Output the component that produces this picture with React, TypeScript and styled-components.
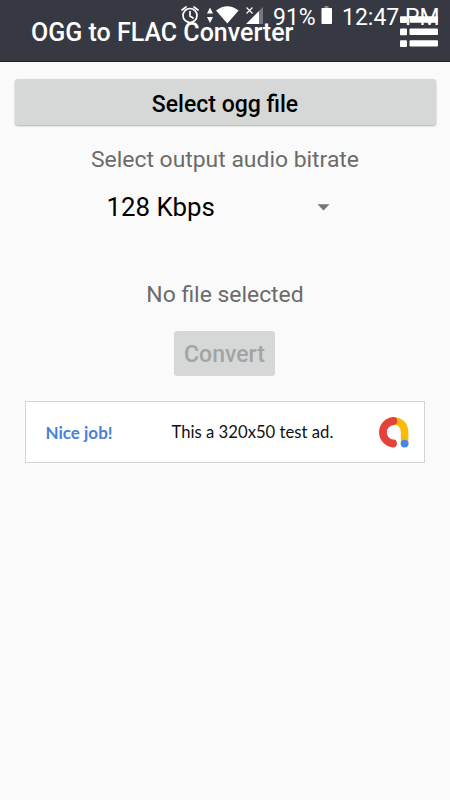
import React from "react";
import styled, { createGlobalStyle } from "styled-components";

const GlobalStyle = createGlobalStyle`
  * { box-sizing: border-box; }
  body {
    margin: 0;
    background: #fafafa;
    font-family: Roboto, "Liberation Sans", sans-serif;
  }
`;

const Screen = styled.div`
  position: relative;
  width: 450px;
  height: 800px;
  overflow: hidden;
  background: #fafafa;
`;

const AppBar = styled.header`
  display: flex;
  justify-content: space-between;
  height: 62px;
  padding: 16px 12px 0 31px;
  background: #363942;
  border-bottom: 1px solid #1d1f25;
`;

const Title = styled.h1`
  margin: 0;
  padding-top: 1px;
  color: #fff;
  font-size: 25px;
  font-weight: 500;
  line-height: 32px;
  white-space: nowrap;
`;

const StatusBar = styled.div`
  position: absolute;
  top: 0;
  right: 11px;
  display: flex;
  height: 33px;
  color: #fff;
`;

const StatusText = styled.span<{ $width: number }>`
  width: ${({ $width }) => $width}px;
  font-size: 23px;
  line-height: 35px;
  white-space: nowrap;
`;

const Content = styled.main`
  display: flex;
  flex-direction: column;
  align-items: center;
  padding-top: 17px;
`;

const Button = styled.button<{ $wide?: boolean }>`
  width: ${({ $wide }) => ($wide ? "421px" : "101px")};
  height: ${({ $wide }) => ($wide ? "46px" : "45px")};
  margin: ${({ $wide }) => ($wide ? "0" : "20px 1px 0 0")};
  padding: ${({ $wide }) => ($wide ? "4px 0 0" : "2px 0 0")};
  border: 0;
  border-radius: 3px;
  background: #d6d8d7;
  box-shadow: ${({ $wide }) => ($wide ? "0 1px 2px rgba(0, 0, 0, 0.3)" : "none")};
  color: ${({ $wide }) => ($wide ? "#000" : "#a2a4a3")};
  font: 500 23px Roboto, "Liberation Sans", sans-serif;
`;

const Label = styled.p<{ $top: number }>`
  margin: ${({ $top }) => $top}px 0 0;
  color: #6b6b6b;
  font-size: 22.9px;
  line-height: 32px;
`;

const Spinner = styled.div`
  display: flex;
  align-items: center;
  justify-content: space-between;
  width: 223px;
  height: 32px;
  margin: 15px 14px 0 0;
  color: #000;
  font-size: 25.8px;
`;

const Ad = styled.aside`
  display: flex;
  align-items: center;
  width: 400px;
  height: 62px;
  margin: 25px 1px 0 0;
  padding: 0 15px 0 20px;
  border: 1px solid #cfd5d8;
  background: #fff;
  font-family: Lato, sans-serif;
  font-size: 16.7px;
`;

const AdLead = styled.span`
  width: 126px;
  color: #4781d8;
  font-size: 17px;
  font-weight: 700;
`;

const AdCopy = styled.span`
  flex: 1;
  color: #111;
  white-space: nowrap;
`;

const StatusIcons = () => (
  <svg width="93" height="33" viewBox="180 0 93 33" fill="none">
    <g stroke="#fff" strokeWidth="1.7" strokeLinecap="round">
      <circle cx="190" cy="15.5" r="7" />
      <path d="M190 11.5v4.5l3 2M182 10l4-3M194 7l4 3" />
    </g>
    <path d="M210 7.5l3 6h-6zM210 23l3-6h-6z" fill="#fff" />
    <path d="M216 10.5Q227.3 1.8 238.6 10.5L227.3 23.5z" fill="#fff" />
    <path d="M259 11l4-4v17h-4z" fill="#777981" />
    <path d="M246 24l13-13v13z" fill="#fff" />
    <path d="M246.5 7.5l6 6m0-6l-6 6" stroke="#fff" strokeWidth="1.2" />
  </svg>
);

const Battery = () => (
  <svg width="26" height="33" viewBox="316 0 26 33">
    <path d="M324.5 6h4v2.5h-4z" fill="#85878d" />
    <rect x="321.5" y="8" width="10.5" height="16" rx="0.7" fill="#fff" />
  </svg>
);

const ListIcon = () => (
  <svg width="38" height="32" viewBox="0 0 38 32" fill="#fff">
    {[0.3, 12.6, 24.2].map((y) => (
      <React.Fragment key={y}>
        <rect x="0" y={y} width="7" height="6.7" rx="1" />
        <rect x="9.5" y={y} width="28.5" height="6.4" rx="1" />
      </React.Fragment>
    ))}
  </svg>
);

const DropArrow = () => (
  <svg width="13" height="7" viewBox="0 0 13 7">
    <path d="M0.5 0.2h12l-6 6.2z" fill="#757575" />
  </svg>
);

const AdMobLogo = () => (
  <svg width="31" height="31" viewBox="0 0 31 31" fill="none" strokeLinecap="round">
    <path d="M15.5 4C22.5 4 26.6 8.6 26.6 15.5V26" stroke="#f9bb09" strokeWidth="7.6" />
    <path d="M15.4 4A11.3 11.3 0 0 0 15 26.5" stroke="#e4433a" strokeWidth="7.8" />
    <circle cx="26.6" cy="26.6" r="3.9" fill="#4586e8" />
  </svg>
);

export default function App() {
  return (
    <>
      <GlobalStyle />
      <Screen>
        <AppBar>
          <Title>OGG to FLAC Converter</Title>
          <ListIcon />
        </AppBar>
        <StatusBar>
          <StatusIcons />
          <StatusText $width={43}>91%</StatusText>
          <Battery />
          <StatusText $width={97}>12:47 PM</StatusText>
        </StatusBar>
        <Content>
          <Button $wide>Select ogg file</Button>
          <Label $top={19}>Select output audio bitrate</Label>
          <Spinner>
            <span>128 Kbps</span>
            <DropArrow />
          </Spinner>
          <Label $top={56}>No file selected</Label>
          <Button disabled>Convert</Button>
          <Ad>
            <AdLead>Nice job!</AdLead>
            <AdCopy>This a 320x50 test ad.</AdCopy>
            <AdMobLogo />
          </Ad>
        </Content>
      </Screen>
    </>
  );
}
